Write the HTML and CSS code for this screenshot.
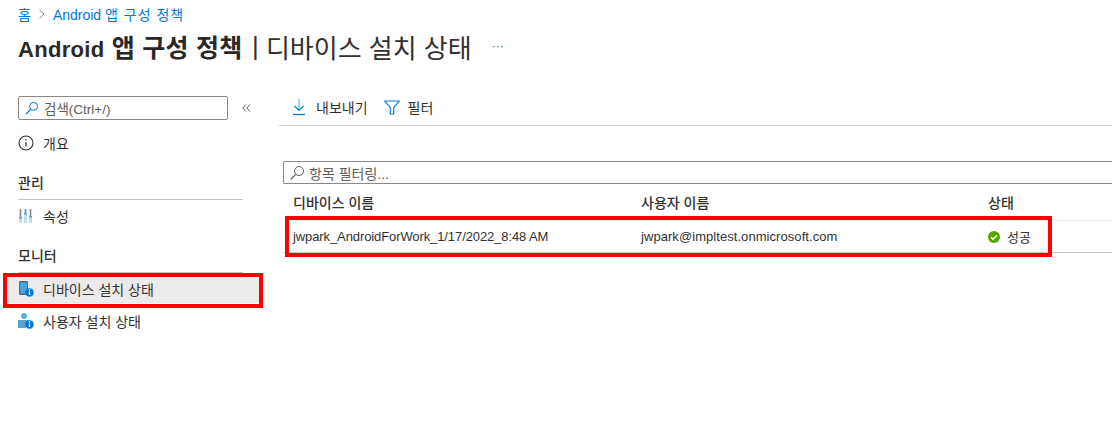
FILE: index.html
```html
<!DOCTYPE html>
<html lang="ko">
<head>
  <meta charset="UTF-8" />
  <title>Android 앱 구성 정책</title>
  <link rel="stylesheet" href="styles.css">
</head>
<body>
  <div class="crumbs"><a>홈</a>
    <svg class="chev" width="8" height="10" viewBox="0 0 8 10"><path d="M1.500 .8 6 5 1.500 9.200" fill="none" stroke="#8a8886"/></svg>
    <a>Android <span class="ko">앱 구성 정책</span></a></div>
  <div class="title"><b><span class="latin">Android</span> 앱 구성 정책</b><span class="sep"> | </span>디바이스 설치 상태<span class="more">···</span></div>

  <div class="main">
    <div class="side">
      <div class="side-search">
        <div class="input">
          <svg width="14" height="14" viewBox="0 0 14 14"><circle cx="8.600" cy="5.400" r="4" fill="none" stroke="#0078d4"/><path d="M5.700 8.300 1 13" stroke="#0078d4" stroke-width="1.200"/></svg>
          <span>검색(Ctrl+/)</span>
        </div>
        <svg class="collapse" width="9" height="8" viewBox="0 0 9 8"><path d="M4 .5.800 4 4 7.500M8 .5 4.800 4 8 7.500" fill="none" stroke="#605e5c"/></svg>
      </div>
      <div class="item">
        <svg class="ico" width="16" height="16" viewBox="0 0 16 16"><circle cx="8" cy="8" r="7" fill="none" stroke="#323130" stroke-width="1.100"/><path d="M8 7v4.500" stroke="#323130" stroke-width="1.200"/><circle cx="8" cy="4.800" r=".8" fill="#323130"/></svg>
        개요
      </div>
      <div class="group">관리</div>
      <div class="item">
        <svg class="ico" width="16" height="16" viewBox="0 0 16 16"><path d="M1 1h3v14H1zM6 1h3v14H6zM11 1h3v14h-3z" fill="#bfe0f2"/><path d="M1 9h3v1.500H1zM6 5h3v1.500H6zM11 8h3v1.500h-3z" fill="#59a5cf"/><path d="M2 1h1v8H2zM7 1h1v4H7zM12 1h1v7h-1z" fill="#8a8886"/></svg>
        속성
      </div>
      <div class="group">모니터</div>
      <div class="item selected">
        <svg class="ico" width="16" height="16" viewBox="0 0 16 16"><rect x="1" y="0" width="9" height="14" rx="1.200" fill="#5a6a75"/><rect x="2" y="1.500" width="7" height="11" fill="#4aa3dc"/><circle cx="11.500" cy="11.500" r="4.300" fill="#0078d4"/><path d="M11.500 10.500v3.500" stroke="#fff" stroke-width="1.400"/><circle cx="11.500" cy="8.900" r=".8" fill="#fff"/></svg>
        디바이스 설치 상태
      </div>
      <div class="item">
        <svg class="ico" width="16" height="16" viewBox="0 0 16 16"><circle cx="6" cy="3" r="3" fill="#59b4d9"/><path d="M0 7h10.500v4l-3 4H0z" fill="#59a5cf"/><circle cx="11.500" cy="11.500" r="4.300" fill="#0078d4"/><path d="M11.500 10.500v3.500" stroke="#fff" stroke-width="1.400"/><circle cx="11.500" cy="8.900" r=".8" fill="#fff"/></svg>
        사용자 설치 상태
      </div>
      <div class="mark mark-side"></div>
    </div>

    <div class="content">
      <div class="toolbar">
        <span class="tool">
          <svg width="16" height="18" viewBox="0 0 16 18"><path d="M7 1v11" stroke="#7cb8ea" stroke-width="1.300"/><path d="M2.500 8 7 12.500 11.500 8" fill="none" stroke="#0078d4" stroke-width="1.200"/><path d="M1 16.500h12" stroke="#0078d4" stroke-width="1.300"/></svg>
          내보내기
        </span>
        <span class="tool">
          <svg width="16" height="15" viewBox="0 0 16 15"><path d="M.8 1h14.400L9.700 7.500V14H6.300V7.500z" fill="none" stroke="#0078d4" stroke-width="1.100"/></svg>
          필터
        </span>
      </div>
      <div class="filter">
        <svg width="16" height="16" viewBox="0 0 16 16"><circle cx="10" cy="6" r="4.500" fill="none" stroke="#605e5c"/><path d="M6.700 9.300 1.500 14.500" stroke="#605e5c" stroke-width="1.200"/></svg>
        <span>항목 필터링...</span>
      </div>
      <div class="grid head">
        <span>디바이스 이름</span><span>사용자 이름</span><span>상태</span>
      </div>
      <div class="grid row">
        <span class="device">jwpark_AndroidForWork_1/17/2022_8:48 AM</span>
        <span class="email">jwpark@impltest.onmicrosoft.com</span>
        <span class="status">
          <svg width="12" height="12" viewBox="0 0 12 12"><circle cx="6" cy="6" r="6" fill="#57a300"/><path d="M3 6.200 5.100 8.300 9 4.200" fill="none" stroke="#fff" stroke-width="1.500"/></svg>
          <span>성공</span>
        </span>
      </div>
      <div class="mark mark-row"></div>
    </div>
  </div>
</body>
</html>
```

FILE: styles.css
```css
* { box-sizing: border-box; margin: 0; padding: 0; }
body { background: #fff; color: #323130; font-family: "Liberation Sans", "Noto Sans CJK KR", sans-serif; font-size: 14px; overflow: hidden; }
svg { flex: none; }

.crumbs { display: flex; align-items: center; gap: 7px; height: 14px; margin: 7px 0 0 18px; font-size: 14px; color: #0078d4; white-space: pre; }
.crumbs .ko { letter-spacing: 1px; }
.title { display: flex; align-items: center; height: 30px; margin: 10px 0 0 18px; font-size: 26px; white-space: pre; color: #323130; }
.title b { font-size: 25px; font-weight: 700; letter-spacing: .3px; color: #292827; }
.latin { font-size: 22px; }
.sep { margin-left: 2px; }
.more { margin-left: 20px; font-size: 12px; color: #605e5c; }

.main { display: flex; margin-top: 35px; }
.side { position: relative; width: 279px; flex: none; padding-left: 18px; }
.side-search { display: flex; align-items: center; height: 24px; }
.input { display: flex; align-items: center; gap: 5px; width: 210px; height: 24px; padding-left: 6px; border: 1px solid #8a8886; border-radius: 2px; color: #605e5c; font-size: 13.500px; }
.collapse { margin-left: 14px; }

.item { display: flex; align-items: center; height: 32px; width: 245px; margin-left: -18px; padding-left: 18px; color: #323130; }
.side-search + .item { margin-top: 7px; }
.ico { margin-right: 9px; }
.group { width: 225px; height: 23px; margin-top: 18px; border-bottom: 1px solid #c8c6c4; font-weight: 500; line-height: 12px; }
.selected { width: 256px; padding-left: 14px; height: 29px; margin: 1px 0 2px -14px; background: #edebe9; }

.mark { position: absolute; border: 4px solid #f00; }
.mark-side { left: 3px; top: 177px; width: 260px; height: 35px; }

.content { position: relative; flex: 1; min-width: 0; }
.toolbar { display: flex; align-items: center; gap: 16px; height: 30px; padding: 0 0 7px 13px; border-bottom: 1px solid #d2d0ce; }
.tool { display: flex; align-items: center; gap: 8px; color: #323130; }
.filter { display: flex; align-items: center; gap: 4px; height: 23px; margin: 35px 0 0 4px; padding-left: 5px; border: 1px solid #8a8886; border-right: none; border-radius: 2px 0 0 2px; color: #605e5c; }

.grid { display: grid; grid-template-columns: 348px 347px 1fr; align-items: center; margin-left: 4px; padding-left: 10px; }
.head { height: 37px; font-weight: 500; color: #323130; border-bottom: 1px solid #edebe9; }
.row { height: 32px; border-bottom: 1px solid #c8c6c4; color: #323130; font-size: 13px; }
.device { letter-spacing: -.1px; }
.email { letter-spacing: .06px; }
.status { display: flex; align-items: center; gap: 7px; }
.mark-row { left: 6px; top: 120px; width: 767px; height: 41px; }
```
